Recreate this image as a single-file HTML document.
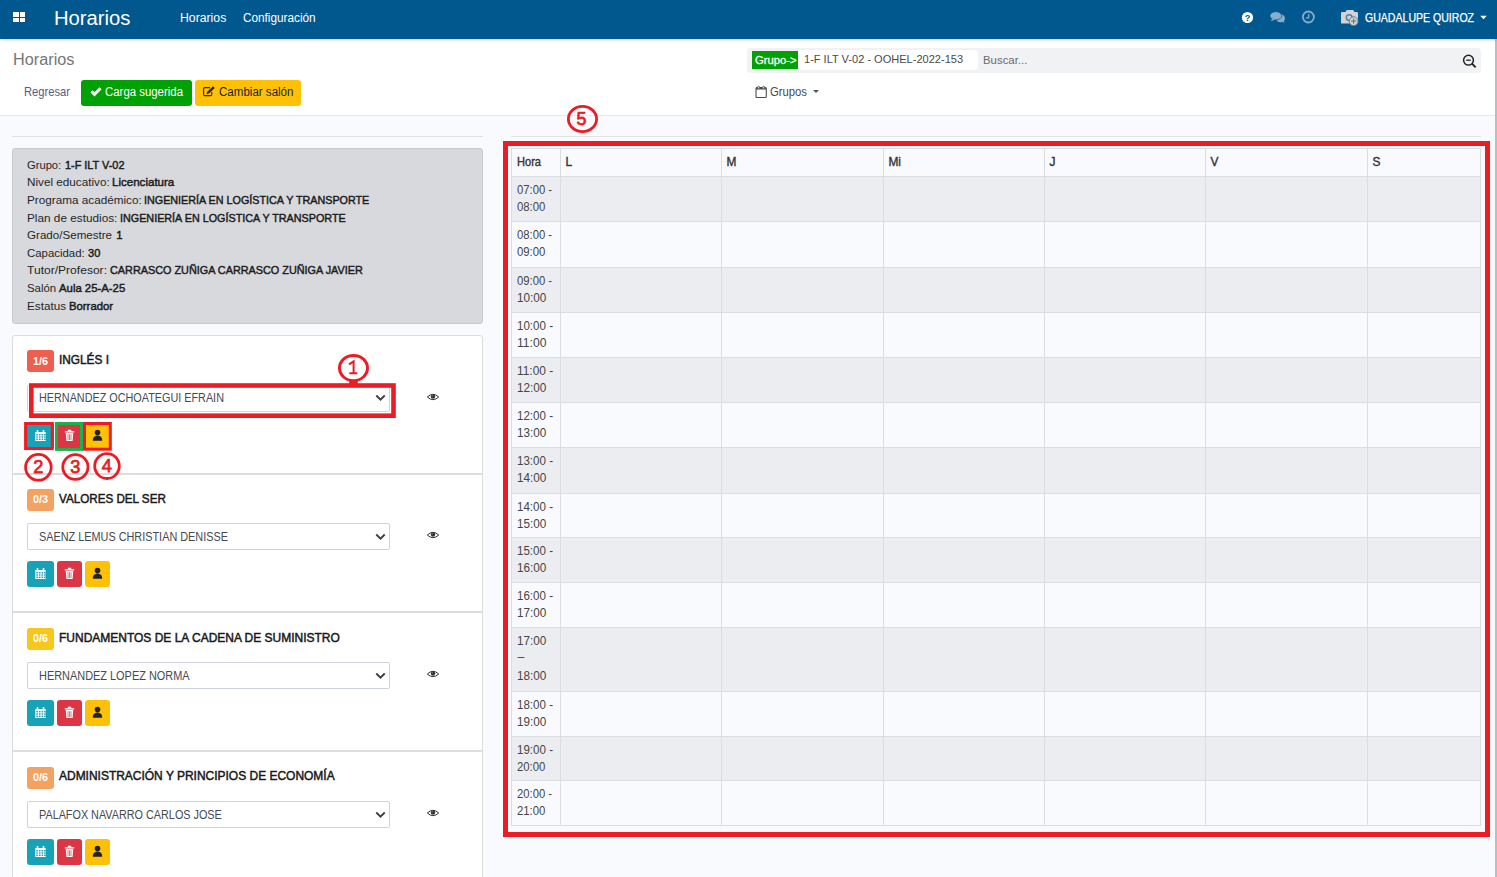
<!DOCTYPE html><html><head><meta charset="utf-8"><style>
*{box-sizing:border-box;margin:0;padding:0}
html,body{width:1497px;height:877px;overflow:hidden;background:#f9fafd;font-family:"Liberation Sans", sans-serif;}
.a{position:absolute;white-space:nowrap}
.t{position:absolute;white-space:nowrap;line-height:1}
</style></head><body><div class="a" style="left:0px;top:0px;width:1497px;height:39px;background:#01588f;box-shadow:0 1px 3px rgba(0,0,0,.18);z-index:2"></div>
<div class="a" style="left:0;top:0;width:1497px;height:39px;z-index:3">
<div class="a" style="left:13px;top:12px;width:5.5px;height:4.5px;background:#fff"></div>
<div class="a" style="left:19.5px;top:12px;width:5.5px;height:4.5px;background:#fff"></div>
<div class="a" style="left:13px;top:17.5px;width:5.5px;height:4.5px;background:#fff"></div>
<div class="a" style="left:19.5px;top:17.5px;width:5.5px;height:4.5px;background:#fff"></div>
<div class="t" id="tx0" style="left:54.00px;top:8.07px;font-size:20px;color:#fff;font-weight:400;letter-spacing:0.000px;transform:scaleX(1.0109);transform-origin:0 0;">Horarios</div>
<div class="t" id="tx1" style="left:180.40px;top:11.59px;font-size:12.3px;color:#fff;font-weight:400;letter-spacing:0.000px;transform:scaleX(0.9957);transform-origin:0 0;">Horarios</div>
<div class="t" id="tx2" style="left:243.00px;top:11.59px;font-size:12.3px;color:#fff;font-weight:400;letter-spacing:0.000px;transform:scaleX(0.9574);transform-origin:0 0;">Configuración</div>
<svg class="a" style="left:0;top:0" width="1497" height="39" viewBox="0 0 1497 39">
<circle cx="1247.5" cy="17.5" r="5.6" fill="#fff"/>
<text x="1247.6" y="21.1" font-family="Liberation Sans" font-size="9.2" font-weight="700" text-anchor="middle" fill="#01588f">?</text>
<ellipse cx="1280.6" cy="18.3" rx="4.3" ry="3.9" fill="#86aecb"/>
<path d="M1281.5 21 L1284.8 23 L1283.3 20.2 Z" fill="#86aecb"/>
<ellipse cx="1275.8" cy="15.8" rx="5.9" ry="4.1" fill="#86aecb" stroke="#01588f" stroke-width="0.7"/>
<path d="M1272.3 18.8 L1270.6 21.3 L1275 19.7 Z" fill="#86aecb"/>
<circle cx="1308.4" cy="17" r="5.5" fill="none" stroke="#86aecb" stroke-width="1.8"/>
<path d="M1308.7 13.9 V17.9 H1305.9" fill="none" stroke="#86aecb" stroke-width="1.3"/>
<path d="M1341 13.3 Q1341 12 1342.3 12 H1345.5 L1346.8 10 H1353.2 L1354.5 12 H1356.7 Q1358 12 1358 13.3 V22.4 Q1358 23.6 1356.7 23.6 H1342.3 Q1341 23.6 1341 22.4 Z" fill="#d3d4d5"/>
<circle cx="1349.2" cy="17.6" r="2.9" fill="none" stroke="#5d7f98" stroke-width="1.5"/>
<circle cx="1353.6" cy="21.2" r="4.4" fill="#d3d4d5" stroke="#5d7f98" stroke-width="1"/>
<path d="M1353.6 18.6 V23.8 M1351 21.2 H1356.2" stroke="#5d7f98" stroke-width="1.2"/>
<path d="M1480.2 15.8 H1486.8 L1483.5 19.3 Z" fill="#fff"/>
</svg>
<div class="t" id="tx3" style="left:1364.60px;top:11.60px;font-size:12.4px;color:#fff;font-weight:400;letter-spacing:0.000px;transform:scaleX(0.8516);transform-origin:0 0;-webkit-text-stroke:0.25px #fff">GUADALUPE QUIROZ</div>
</div>
<div class="a" style="left:0px;top:39px;width:1497px;height:77px;background:#fff;border-bottom:1px solid #e6e9ee"></div>
<div class="t" id="tx4" style="left:13.25px;top:52.39px;font-size:15.6px;color:#767676;font-weight:400;letter-spacing:0.000px;transform:scaleX(1.0432);transform-origin:0 0;">Horarios</div>
<div class="t" id="tx5" style="left:24.00px;top:85.76px;font-size:12.8px;color:#5a5b7e;font-weight:400;letter-spacing:0.000px;transform:scaleX(0.8751);transform-origin:0 0;">Regresar</div>
<div class="a" style="left:81px;top:80px;width:111px;height:26px;background:#00a104;border-radius:3px"></div>
<svg class="a" style="left:90px;top:86px" width="12" height="11" viewBox="0 0 12 11"><path d="M1.5 5.4 L4.5 8.4 L10.6 2.3" fill="none" stroke="#fff" stroke-width="3"/></svg>
<div class="t" id="tx6" style="left:104.70px;top:85.89px;font-size:12.3px;color:#fff;font-weight:400;letter-spacing:0.000px;transform:scaleX(0.9274);transform-origin:0 0;">Carga sugerida</div>
<div class="a" style="left:195px;top:80px;width:106px;height:26px;background:#ffc107;border-radius:3px"></div>
<svg class="a" style="left:200px;top:83px" width="18" height="16" viewBox="200 83 18 16"><path d="M210 87.6 H204.8 Q203.6 87.6 203.6 88.8 V94.4 Q203.6 95.6 204.8 95.6 H210.6 Q211.8 95.6 211.8 94.4 V92" fill="none" stroke="#2a2a2a" stroke-width="1.1"/><path d="M206.6 94.2 L207 92 L213 86.2 L214.8 88 L208.8 93.8 Z" fill="#2a2a2a"/><path d="M207.7 92.4 L208.5 93.2" stroke="#ffc107" stroke-width=".6"/></svg>
<div class="t" id="tx7" style="left:218.50px;top:85.89px;font-size:12.3px;color:#212529;font-weight:400;letter-spacing:0.000px;transform:scaleX(0.9393);transform-origin:0 0;">Cambiar salón</div>
<div class="a" style="left:747px;top:48px;width:734px;height:25px;background:#f1f2f4;border-radius:4px"></div>
<div class="a" style="left:752px;top:51px;width:46px;height:18px;background:#00a104"></div>
<div class="t" id="tx8" style="left:755.00px;top:54.71px;font-size:11.8px;color:#fff;font-weight:400;letter-spacing:0.000px;transform:scaleX(0.9535);transform-origin:0 0;-webkit-text-stroke:0.3px #fff">Grupo-&gt;</div>
<div class="a" style="left:798px;top:50px;width:180px;height:20px;background:#fff;border-radius:0 4px 4px 0"></div>
<div class="t" id="tx9" style="left:803.70px;top:54.01px;font-size:11.8px;color:#4a4a4a;font-weight:400;letter-spacing:0.000px;transform:scaleX(0.9355);transform-origin:0 0;">1-F ILT V-02 - OOHEL-2022-153</div>
<div class="t" id="tx10" style="left:982.50px;top:55.01px;font-size:11.8px;color:#6a6a6a;font-weight:400;letter-spacing:0.000px;transform:scaleX(0.9660);transform-origin:0 0;">Buscar...</div>
<svg class="a" style="left:1461px;top:53px" width="17" height="17" viewBox="0 0 17 17"><circle cx="7.5" cy="7.2" r="4.9" fill="none" stroke="#222" stroke-width="1.5"/><path d="M5.2 7.2 H9.8" stroke="#222" stroke-width="1.3"/><path d="M11 10.7 L14.6 14.4" stroke="#222" stroke-width="1.9"/></svg>
<svg class="a" style="left:754px;top:85px" width="14" height="14" viewBox="0 0 14 14"><rect x="2" y="2.6" width="10.3" height="9.9" rx="1" fill="none" stroke="#4d4d4d" stroke-width="1.1"/><rect x="2" y="2.6" width="10.3" height="1.9" fill="#4d4d4d"/><rect x="3.7" y="1.3" width="1.9" height="2.6" rx=".8" fill="#c8f0d8" stroke="#555" stroke-width=".8"/><rect x="8.7" y="1.3" width="1.9" height="2.6" rx=".8" fill="#c8f0d8" stroke="#555" stroke-width=".8"/></svg>
<div class="t" id="tx11" style="left:769.70px;top:85.92px;font-size:12.5px;color:#4a4a4a;font-weight:400;letter-spacing:0.000px;transform:scaleX(0.9024);transform-origin:0 0;">Grupos</div>
<div class="a" style="left:813px;top:90px;width:0;height:0;border-left:3.3px solid transparent;border-right:3.3px solid transparent;border-top:3.3px solid #555"></div>
<div class="a" style="left:1495px;top:39px;width:2px;height:838px;background:#b9bec3"></div>
<div class="a" style="left:12px;top:136px;width:471px;height:1px;background:#dfe1e5"></div>
<div class="a" style="left:12px;top:148px;width:471px;height:176px;background:#d8d9dc;border:1px solid #c9cacd;border-radius:3px"></div>
<div class="t" id="tx12" style="left:27.45px;top:159.67px;font-size:11.5px;color:#262626;font-weight:400;letter-spacing:0.000px;transform:scaleX(0.9723);transform-origin:0 0;">Grupo:</div>
<div class="t" id="tx13" style="left:64.70px;top:159.83px;font-size:11.3px;color:#1c1c1c;font-weight:400;letter-spacing:0.000px;transform:scaleX(0.9629);transform-origin:0 0;-webkit-text-stroke:0.45px #1c1c1c">1-F ILT V-02</div>
<div class="t" id="tx14" style="left:27.45px;top:177.28px;font-size:11.5px;color:#262626;font-weight:400;letter-spacing:0.000px;transform:scaleX(1.0188);transform-origin:0 0;">Nivel educativo:</div>
<div class="t" id="tx15" style="left:112.30px;top:177.44px;font-size:11.3px;color:#1c1c1c;font-weight:400;letter-spacing:0.000px;transform:scaleX(1.0227);transform-origin:0 0;-webkit-text-stroke:0.45px #1c1c1c">Licenciatura</div>
<div class="t" id="tx16" style="left:27.45px;top:194.89px;font-size:11.5px;color:#262626;font-weight:400;letter-spacing:0.000px;transform:scaleX(1.0198);transform-origin:0 0;">Programa académico:</div>
<div class="t" id="tx17" style="left:144.40px;top:195.05px;font-size:11.3px;color:#1c1c1c;font-weight:400;letter-spacing:0.000px;transform:scaleX(0.9527);transform-origin:0 0;-webkit-text-stroke:0.45px #1c1c1c">INGENIERÍA EN LOGÍSTICA Y TRANSPORTE</div>
<div class="t" id="tx18" style="left:27.45px;top:212.50px;font-size:11.5px;color:#262626;font-weight:400;letter-spacing:0.000px;transform:scaleX(1.0242);transform-origin:0 0;">Plan de estudios:</div>
<div class="t" id="tx19" style="left:119.60px;top:212.66px;font-size:11.3px;color:#1c1c1c;font-weight:400;letter-spacing:0.000px;transform:scaleX(0.9544);transform-origin:0 0;-webkit-text-stroke:0.45px #1c1c1c">INGENIERÍA EN LOGÍSTICA Y TRANSPORTE</div>
<div class="t" id="tx20" style="left:27.45px;top:230.11px;font-size:11.5px;color:#262626;font-weight:400;letter-spacing:0.000px;transform:scaleX(1.0083);transform-origin:0 0;">Grado/Semestre</div>
<div class="t" id="tx21" style="left:116.20px;top:230.27px;font-size:11.3px;color:#1c1c1c;font-weight:400;letter-spacing:0.000px;-webkit-text-stroke:0.45px #1c1c1c">1</div>
<div class="t" id="tx22" style="left:27.45px;top:247.72px;font-size:11.5px;color:#262626;font-weight:400;letter-spacing:0.000px;transform:scaleX(0.9915);transform-origin:0 0;">Capacidad:</div>
<div class="t" id="tx23" style="left:87.90px;top:247.88px;font-size:11.3px;color:#1c1c1c;font-weight:400;letter-spacing:0.000px;transform:scaleX(0.9771);transform-origin:0 0;-webkit-text-stroke:0.45px #1c1c1c">30</div>
<div class="t" id="tx24" style="left:27.45px;top:265.33px;font-size:11.5px;color:#262626;font-weight:400;letter-spacing:0.000px;transform:scaleX(1.0488);transform-origin:0 0;">Tutor/Profesor:</div>
<div class="t" id="tx25" style="left:109.60px;top:265.49px;font-size:11.3px;color:#1c1c1c;font-weight:400;letter-spacing:0.000px;transform:scaleX(0.9597);transform-origin:0 0;-webkit-text-stroke:0.45px #1c1c1c">CARRASCO ZUÑIGA CARRASCO ZUÑIGA JAVIER</div>
<div class="t" id="tx26" style="left:27.45px;top:282.94px;font-size:11.5px;color:#262626;font-weight:400;letter-spacing:0.000px;transform:scaleX(0.9934);transform-origin:0 0;">Salón</div>
<div class="t" id="tx27" style="left:59.10px;top:283.10px;font-size:11.3px;color:#1c1c1c;font-weight:400;letter-spacing:0.000px;transform:scaleX(1.0046);transform-origin:0 0;-webkit-text-stroke:0.45px #1c1c1c">Aula 25-A-25</div>
<div class="t" id="tx28" style="left:27.45px;top:300.55px;font-size:11.5px;color:#262626;font-weight:400;letter-spacing:0.000px;transform:scaleX(1.0166);transform-origin:0 0;">Estatus</div>
<div class="t" id="tx29" style="left:69.30px;top:300.71px;font-size:11.3px;color:#1c1c1c;font-weight:400;letter-spacing:0.000px;transform:scaleX(1.0024);transform-origin:0 0;-webkit-text-stroke:0.45px #1c1c1c">Borrador</div>
<div class="a" style="left:12px;top:335px;width:471px;height:600px;background:#fff;border:1px solid #dcdcdc;border-radius:3px"></div>
<div class="a" style="left:12px;top:473px;width:471px;height:2px;background:#dddddd"></div>
<div class="a" style="left:12px;top:611px;width:471px;height:2px;background:#dddddd"></div>
<div class="a" style="left:12px;top:750px;width:471px;height:2px;background:#dddddd"></div>
<div class="a" style="left:27px;top:350px;width:27px;height:22px;background:#ef5f4f;border-radius:3px"></div>
<div class="t" id="tx30" style="left:32.80px;top:355.64px;font-size:10.7px;color:#fff;font-weight:700;letter-spacing:0.000px;transform:scaleX(1.0084);transform-origin:0 0;">1/6</div>
<div class="t" id="tx31" style="left:59.20px;top:353.96px;font-size:12.8px;color:#1a1a1a;font-weight:400;letter-spacing:0.000px;transform:scaleX(0.9245);transform-origin:0 0;-webkit-text-stroke:0.5px #1a1a1a">INGLÉS I</div>
<div class="a" style="left:27px;top:385px;width:363px;height:27px;background:#fff;border:1px solid #cfd4da;border-radius:2px"></div>
<div class="t" id="tx32" style="left:39.40px;top:393.13px;font-size:11.9px;color:#454a52;font-weight:400;letter-spacing:0.000px;transform:scaleX(0.9099);transform-origin:0 0;">HERNANDEZ OCHOATEGUI EFRAIN</div>
<svg class="a" style="left:375px;top:394.2px" width="11" height="8" viewBox="0 0 11 8"><path d="M1.3 1.5 L5.5 5.6 L9.7 1.5" fill="none" stroke="#3a4048" stroke-width="1.9"/></svg>
<svg class="a" style="left:425.5px;top:391.7px" width="14" height="10" viewBox="0 0 14 10"><path d="M1.3 5 Q7 -0.4 12.7 5 Q7 10.4 1.3 5 Z" fill="#fff" stroke="#333" stroke-width="1"/><circle cx="7" cy="4.5" r="2.2" fill="#333"/><circle cx="6.2" cy="3.8" r=".6" fill="#999"/></svg>
<div class="a" style="left:27px;top:423px;width:27px;height:26px;background:#17a2b8;border-radius:3px"></div>
<svg class="a" style="left:34px;top:429px" width="13" height="13" viewBox="0 0 13 13"><path d="M1.3 3 H11.7 V12 H1.3 Z" fill="#fff"/><path d="M3.5 1 V4 M9.5 1 V4" stroke="#fff" stroke-width="1.6"/><rect x="2.3" y="5.0" width="1.6" height="1.4" fill="#17a2b8"/><rect x="2.3" y="7.3" width="1.6" height="1.4" fill="#17a2b8"/><rect x="2.3" y="9.6" width="1.6" height="1.4" fill="#17a2b8"/><rect x="4.9" y="5.0" width="1.6" height="1.4" fill="#17a2b8"/><rect x="4.9" y="7.3" width="1.6" height="1.4" fill="#17a2b8"/><rect x="4.9" y="9.6" width="1.6" height="1.4" fill="#17a2b8"/><rect x="7.5" y="5.0" width="1.6" height="1.4" fill="#17a2b8"/><rect x="7.5" y="7.3" width="1.6" height="1.4" fill="#17a2b8"/><rect x="7.5" y="9.6" width="1.6" height="1.4" fill="#17a2b8"/><rect x="10.100000000000001" y="5.0" width="1.6" height="1.4" fill="#17a2b8"/><rect x="10.100000000000001" y="7.3" width="1.6" height="1.4" fill="#17a2b8"/><rect x="10.100000000000001" y="9.6" width="1.6" height="1.4" fill="#17a2b8"/></svg>
<div class="a" style="left:57px;top:423px;width:25px;height:26px;background:#dc3545;border-radius:3px"></div>
<svg class="a" style="left:64px;top:429px" width="11" height="13" viewBox="0 0 11 13"><path d="M0.8 2.3 H10.2 V3.6 H0.8 Z M3.8 0.8 H7.2 V2.3 H3.8 Z" fill="#fff"/><path d="M1.8 4 H9.2 L8.6 12 H2.4 Z" fill="#fff"/><path d="M4 5.2 V11 M5.5 5.2 V11 M7 5.2 V11" stroke="#dc3545" stroke-width=".7"/></svg>
<div class="a" style="left:85px;top:423px;width:25px;height:26px;background:#ffc107;border-radius:3px"></div>
<svg class="a" style="left:91px;top:429px" width="13" height="13" viewBox="0 0 13 13"><circle cx="6.5" cy="3.6" r="2.8" fill="#212529"/><path d="M1.8 11.8 Q1.6 6.8 6.5 6.6 Q11.4 6.8 11.2 11.8 Z" fill="#212529"/></svg>
<div class="a" style="left:27px;top:489px;width:27px;height:22px;background:#f4a261;border-radius:3px"></div>
<div class="t" id="tx33" style="left:32.80px;top:494.34px;font-size:10.7px;color:#fff;font-weight:700;letter-spacing:0.000px;transform:scaleX(1.0084);transform-origin:0 0;">0/3</div>
<div class="t" id="tx34" style="left:59.20px;top:492.66px;font-size:12.8px;color:#1a1a1a;font-weight:400;letter-spacing:0.000px;transform:scaleX(0.9103);transform-origin:0 0;-webkit-text-stroke:0.5px #1a1a1a">VALORES DEL SER</div>
<div class="a" style="left:27px;top:523px;width:363px;height:27px;background:#fff;border:1px solid #cfd4da;border-radius:2px"></div>
<div class="t" id="tx35" style="left:39.40px;top:531.83px;font-size:11.9px;color:#454a52;font-weight:400;letter-spacing:0.000px;transform:scaleX(0.9136);transform-origin:0 0;">SAENZ LEMUS CHRISTIAN DENISSE</div>
<svg class="a" style="left:375px;top:532.9px" width="11" height="8" viewBox="0 0 11 8"><path d="M1.3 1.5 L5.5 5.6 L9.7 1.5" fill="none" stroke="#3a4048" stroke-width="1.9"/></svg>
<svg class="a" style="left:425.5px;top:530.4px" width="14" height="10" viewBox="0 0 14 10"><path d="M1.3 5 Q7 -0.4 12.7 5 Q7 10.4 1.3 5 Z" fill="#fff" stroke="#333" stroke-width="1"/><circle cx="7" cy="4.5" r="2.2" fill="#333"/><circle cx="6.2" cy="3.8" r=".6" fill="#999"/></svg>
<div class="a" style="left:27px;top:561px;width:27px;height:26px;background:#17a2b8;border-radius:3px"></div>
<svg class="a" style="left:34px;top:567px" width="13" height="13" viewBox="0 0 13 13"><path d="M1.3 3 H11.7 V12 H1.3 Z" fill="#fff"/><path d="M3.5 1 V4 M9.5 1 V4" stroke="#fff" stroke-width="1.6"/><rect x="2.3" y="5.0" width="1.6" height="1.4" fill="#17a2b8"/><rect x="2.3" y="7.3" width="1.6" height="1.4" fill="#17a2b8"/><rect x="2.3" y="9.6" width="1.6" height="1.4" fill="#17a2b8"/><rect x="4.9" y="5.0" width="1.6" height="1.4" fill="#17a2b8"/><rect x="4.9" y="7.3" width="1.6" height="1.4" fill="#17a2b8"/><rect x="4.9" y="9.6" width="1.6" height="1.4" fill="#17a2b8"/><rect x="7.5" y="5.0" width="1.6" height="1.4" fill="#17a2b8"/><rect x="7.5" y="7.3" width="1.6" height="1.4" fill="#17a2b8"/><rect x="7.5" y="9.6" width="1.6" height="1.4" fill="#17a2b8"/><rect x="10.100000000000001" y="5.0" width="1.6" height="1.4" fill="#17a2b8"/><rect x="10.100000000000001" y="7.3" width="1.6" height="1.4" fill="#17a2b8"/><rect x="10.100000000000001" y="9.6" width="1.6" height="1.4" fill="#17a2b8"/></svg>
<div class="a" style="left:57px;top:561px;width:25px;height:26px;background:#dc3545;border-radius:3px"></div>
<svg class="a" style="left:64px;top:567px" width="11" height="13" viewBox="0 0 11 13"><path d="M0.8 2.3 H10.2 V3.6 H0.8 Z M3.8 0.8 H7.2 V2.3 H3.8 Z" fill="#fff"/><path d="M1.8 4 H9.2 L8.6 12 H2.4 Z" fill="#fff"/><path d="M4 5.2 V11 M5.5 5.2 V11 M7 5.2 V11" stroke="#dc3545" stroke-width=".7"/></svg>
<div class="a" style="left:85px;top:561px;width:25px;height:26px;background:#ffc107;border-radius:3px"></div>
<svg class="a" style="left:91px;top:567px" width="13" height="13" viewBox="0 0 13 13"><circle cx="6.5" cy="3.6" r="2.8" fill="#212529"/><path d="M1.8 11.8 Q1.6 6.8 6.5 6.6 Q11.4 6.8 11.2 11.8 Z" fill="#212529"/></svg>
<div class="a" style="left:27px;top:628px;width:27px;height:22px;background:#f6c81d;border-radius:3px"></div>
<div class="t" id="tx36" style="left:32.80px;top:633.34px;font-size:10.7px;color:#fff;font-weight:700;letter-spacing:0.000px;transform:scaleX(1.0084);transform-origin:0 0;">0/6</div>
<div class="t" id="tx37" style="left:59.20px;top:631.66px;font-size:12.8px;color:#1a1a1a;font-weight:400;letter-spacing:0.000px;transform:scaleX(0.9367);transform-origin:0 0;-webkit-text-stroke:0.5px #1a1a1a">FUNDAMENTOS DE LA CADENA DE SUMINISTRO</div>
<div class="a" style="left:27px;top:662px;width:363px;height:27px;background:#fff;border:1px solid #cfd4da;border-radius:2px"></div>
<div class="t" id="tx38" style="left:39.40px;top:670.83px;font-size:11.9px;color:#454a52;font-weight:400;letter-spacing:0.000px;transform:scaleX(0.9190);transform-origin:0 0;">HERNANDEZ LOPEZ NORMA</div>
<svg class="a" style="left:375px;top:671.9px" width="11" height="8" viewBox="0 0 11 8"><path d="M1.3 1.5 L5.5 5.6 L9.7 1.5" fill="none" stroke="#3a4048" stroke-width="1.9"/></svg>
<svg class="a" style="left:425.5px;top:669.4px" width="14" height="10" viewBox="0 0 14 10"><path d="M1.3 5 Q7 -0.4 12.7 5 Q7 10.4 1.3 5 Z" fill="#fff" stroke="#333" stroke-width="1"/><circle cx="7" cy="4.5" r="2.2" fill="#333"/><circle cx="6.2" cy="3.8" r=".6" fill="#999"/></svg>
<div class="a" style="left:27px;top:700px;width:27px;height:26px;background:#17a2b8;border-radius:3px"></div>
<svg class="a" style="left:34px;top:706px" width="13" height="13" viewBox="0 0 13 13"><path d="M1.3 3 H11.7 V12 H1.3 Z" fill="#fff"/><path d="M3.5 1 V4 M9.5 1 V4" stroke="#fff" stroke-width="1.6"/><rect x="2.3" y="5.0" width="1.6" height="1.4" fill="#17a2b8"/><rect x="2.3" y="7.3" width="1.6" height="1.4" fill="#17a2b8"/><rect x="2.3" y="9.6" width="1.6" height="1.4" fill="#17a2b8"/><rect x="4.9" y="5.0" width="1.6" height="1.4" fill="#17a2b8"/><rect x="4.9" y="7.3" width="1.6" height="1.4" fill="#17a2b8"/><rect x="4.9" y="9.6" width="1.6" height="1.4" fill="#17a2b8"/><rect x="7.5" y="5.0" width="1.6" height="1.4" fill="#17a2b8"/><rect x="7.5" y="7.3" width="1.6" height="1.4" fill="#17a2b8"/><rect x="7.5" y="9.6" width="1.6" height="1.4" fill="#17a2b8"/><rect x="10.100000000000001" y="5.0" width="1.6" height="1.4" fill="#17a2b8"/><rect x="10.100000000000001" y="7.3" width="1.6" height="1.4" fill="#17a2b8"/><rect x="10.100000000000001" y="9.6" width="1.6" height="1.4" fill="#17a2b8"/></svg>
<div class="a" style="left:57px;top:700px;width:25px;height:26px;background:#dc3545;border-radius:3px"></div>
<svg class="a" style="left:64px;top:706px" width="11" height="13" viewBox="0 0 11 13"><path d="M0.8 2.3 H10.2 V3.6 H0.8 Z M3.8 0.8 H7.2 V2.3 H3.8 Z" fill="#fff"/><path d="M1.8 4 H9.2 L8.6 12 H2.4 Z" fill="#fff"/><path d="M4 5.2 V11 M5.5 5.2 V11 M7 5.2 V11" stroke="#dc3545" stroke-width=".7"/></svg>
<div class="a" style="left:85px;top:700px;width:25px;height:26px;background:#ffc107;border-radius:3px"></div>
<svg class="a" style="left:91px;top:706px" width="13" height="13" viewBox="0 0 13 13"><circle cx="6.5" cy="3.6" r="2.8" fill="#212529"/><path d="M1.8 11.8 Q1.6 6.8 6.5 6.6 Q11.4 6.8 11.2 11.8 Z" fill="#212529"/></svg>
<div class="a" style="left:27px;top:767px;width:27px;height:22px;background:#f4a261;border-radius:3px"></div>
<div class="t" id="tx39" style="left:32.80px;top:772.04px;font-size:10.7px;color:#fff;font-weight:700;letter-spacing:0.000px;transform:scaleX(1.0084);transform-origin:0 0;">0/6</div>
<div class="t" id="tx40" style="left:59.20px;top:770.36px;font-size:12.8px;color:#1a1a1a;font-weight:400;letter-spacing:0.000px;transform:scaleX(0.9356);transform-origin:0 0;-webkit-text-stroke:0.5px #1a1a1a">ADMINISTRACIÓN Y PRINCIPIOS DE ECONOMÍA</div>
<div class="a" style="left:27px;top:801px;width:363px;height:27px;background:#fff;border:1px solid #cfd4da;border-radius:2px"></div>
<div class="t" id="tx41" style="left:39.40px;top:809.53px;font-size:11.9px;color:#454a52;font-weight:400;letter-spacing:0.000px;transform:scaleX(0.9100);transform-origin:0 0;">PALAFOX NAVARRO CARLOS JOSE</div>
<svg class="a" style="left:375px;top:810.6px" width="11" height="8" viewBox="0 0 11 8"><path d="M1.3 1.5 L5.5 5.6 L9.7 1.5" fill="none" stroke="#3a4048" stroke-width="1.9"/></svg>
<svg class="a" style="left:425.5px;top:808.1px" width="14" height="10" viewBox="0 0 14 10"><path d="M1.3 5 Q7 -0.4 12.7 5 Q7 10.4 1.3 5 Z" fill="#fff" stroke="#333" stroke-width="1"/><circle cx="7" cy="4.5" r="2.2" fill="#333"/><circle cx="6.2" cy="3.8" r=".6" fill="#999"/></svg>
<div class="a" style="left:27px;top:839px;width:27px;height:26px;background:#17a2b8;border-radius:3px"></div>
<svg class="a" style="left:34px;top:845px" width="13" height="13" viewBox="0 0 13 13"><path d="M1.3 3 H11.7 V12 H1.3 Z" fill="#fff"/><path d="M3.5 1 V4 M9.5 1 V4" stroke="#fff" stroke-width="1.6"/><rect x="2.3" y="5.0" width="1.6" height="1.4" fill="#17a2b8"/><rect x="2.3" y="7.3" width="1.6" height="1.4" fill="#17a2b8"/><rect x="2.3" y="9.6" width="1.6" height="1.4" fill="#17a2b8"/><rect x="4.9" y="5.0" width="1.6" height="1.4" fill="#17a2b8"/><rect x="4.9" y="7.3" width="1.6" height="1.4" fill="#17a2b8"/><rect x="4.9" y="9.6" width="1.6" height="1.4" fill="#17a2b8"/><rect x="7.5" y="5.0" width="1.6" height="1.4" fill="#17a2b8"/><rect x="7.5" y="7.3" width="1.6" height="1.4" fill="#17a2b8"/><rect x="7.5" y="9.6" width="1.6" height="1.4" fill="#17a2b8"/><rect x="10.100000000000001" y="5.0" width="1.6" height="1.4" fill="#17a2b8"/><rect x="10.100000000000001" y="7.3" width="1.6" height="1.4" fill="#17a2b8"/><rect x="10.100000000000001" y="9.6" width="1.6" height="1.4" fill="#17a2b8"/></svg>
<div class="a" style="left:57px;top:839px;width:25px;height:26px;background:#dc3545;border-radius:3px"></div>
<svg class="a" style="left:64px;top:845px" width="11" height="13" viewBox="0 0 11 13"><path d="M0.8 2.3 H10.2 V3.6 H0.8 Z M3.8 0.8 H7.2 V2.3 H3.8 Z" fill="#fff"/><path d="M1.8 4 H9.2 L8.6 12 H2.4 Z" fill="#fff"/><path d="M4 5.2 V11 M5.5 5.2 V11 M7 5.2 V11" stroke="#dc3545" stroke-width=".7"/></svg>
<div class="a" style="left:85px;top:839px;width:25px;height:26px;background:#ffc107;border-radius:3px"></div>
<svg class="a" style="left:91px;top:845px" width="13" height="13" viewBox="0 0 13 13"><circle cx="6.5" cy="3.6" r="2.8" fill="#212529"/><path d="M1.8 11.8 Q1.6 6.8 6.5 6.6 Q11.4 6.8 11.2 11.8 Z" fill="#212529"/></svg>
<div class="a" style="left:511px;top:136px;width:970px;height:1px;background:#dfe1e5"></div>
<div class="a" style="left:511px;top:148px;width:970px;height:28px;background:#f9fafd"></div>
<div class="a" style="left:511px;top:176px;width:970px;height:45px;background:#ecedf0"></div>
<div class="a" style="left:511px;top:221px;width:970px;height:46px;background:#f9fafd"></div>
<div class="a" style="left:511px;top:267px;width:970px;height:45px;background:#ecedf0"></div>
<div class="a" style="left:511px;top:312px;width:970px;height:45px;background:#f9fafd"></div>
<div class="a" style="left:511px;top:357px;width:970px;height:45px;background:#ecedf0"></div>
<div class="a" style="left:511px;top:402px;width:970px;height:45px;background:#f9fafd"></div>
<div class="a" style="left:511px;top:447px;width:970px;height:46px;background:#ecedf0"></div>
<div class="a" style="left:511px;top:493px;width:970px;height:44px;background:#f9fafd"></div>
<div class="a" style="left:511px;top:537px;width:970px;height:45px;background:#ecedf0"></div>
<div class="a" style="left:511px;top:582px;width:970px;height:45px;background:#f9fafd"></div>
<div class="a" style="left:511px;top:627px;width:970px;height:64px;background:#ecedf0"></div>
<div class="a" style="left:511px;top:691px;width:970px;height:45px;background:#f9fafd"></div>
<div class="a" style="left:511px;top:736px;width:970px;height:44px;background:#ecedf0"></div>
<div class="a" style="left:511px;top:780px;width:970px;height:45px;background:#f9fafd"></div>
<div class="a" style="left:511px;top:148px;width:970px;height:1px;background:#dcdde1"></div>
<div class="a" style="left:511px;top:176px;width:970px;height:1px;background:#dcdde1"></div>
<div class="a" style="left:511px;top:221px;width:970px;height:1px;background:#dcdde1"></div>
<div class="a" style="left:511px;top:267px;width:970px;height:1px;background:#dcdde1"></div>
<div class="a" style="left:511px;top:312px;width:970px;height:1px;background:#dcdde1"></div>
<div class="a" style="left:511px;top:357px;width:970px;height:1px;background:#dcdde1"></div>
<div class="a" style="left:511px;top:402px;width:970px;height:1px;background:#dcdde1"></div>
<div class="a" style="left:511px;top:447px;width:970px;height:1px;background:#dcdde1"></div>
<div class="a" style="left:511px;top:493px;width:970px;height:1px;background:#dcdde1"></div>
<div class="a" style="left:511px;top:537px;width:970px;height:1px;background:#dcdde1"></div>
<div class="a" style="left:511px;top:582px;width:970px;height:1px;background:#dcdde1"></div>
<div class="a" style="left:511px;top:627px;width:970px;height:1px;background:#dcdde1"></div>
<div class="a" style="left:511px;top:691px;width:970px;height:1px;background:#dcdde1"></div>
<div class="a" style="left:511px;top:736px;width:970px;height:1px;background:#dcdde1"></div>
<div class="a" style="left:511px;top:780px;width:970px;height:1px;background:#dcdde1"></div>
<div class="a" style="left:511px;top:825px;width:970px;height:1px;background:#dcdde1"></div>
<div class="a" style="left:511px;top:148px;width:1px;height:678px;background:#dcdde1"></div>
<div class="a" style="left:560px;top:148px;width:1px;height:678px;background:#dcdde1"></div>
<div class="a" style="left:721px;top:148px;width:1px;height:678px;background:#dcdde1"></div>
<div class="a" style="left:883px;top:148px;width:1px;height:678px;background:#dcdde1"></div>
<div class="a" style="left:1044px;top:148px;width:1px;height:678px;background:#dcdde1"></div>
<div class="a" style="left:1205px;top:148px;width:1px;height:678px;background:#dcdde1"></div>
<div class="a" style="left:1367px;top:148px;width:1px;height:678px;background:#dcdde1"></div>
<div class="a" style="left:1480px;top:148px;width:1px;height:678px;background:#dcdde1"></div>
<div class="t" id="tx42" style="left:517.20px;top:156.63px;font-size:11.9px;color:#363636;font-weight:400;letter-spacing:0.000px;transform:scaleX(0.9312);transform-origin:0 0;-webkit-text-stroke:0.4px #363636">Hora</div>
<div class="t" id="tx43" style="left:565.40px;top:156.63px;font-size:11.9px;color:#363636;font-weight:400;letter-spacing:0.000px;-webkit-text-stroke:0.4px #363636">L</div>
<div class="t" id="tx44" style="left:726.40px;top:156.63px;font-size:11.9px;color:#363636;font-weight:400;letter-spacing:0.000px;-webkit-text-stroke:0.4px #363636">M</div>
<div class="t" id="tx45" style="left:888.40px;top:156.63px;font-size:11.9px;color:#363636;font-weight:400;letter-spacing:0.000px;-webkit-text-stroke:0.4px #363636">Mi</div>
<div class="t" id="tx46" style="left:1049.40px;top:156.63px;font-size:11.9px;color:#363636;font-weight:400;letter-spacing:0.000px;-webkit-text-stroke:0.4px #363636">J</div>
<div class="t" id="tx47" style="left:1210.40px;top:156.63px;font-size:11.9px;color:#363636;font-weight:400;letter-spacing:0.000px;-webkit-text-stroke:0.4px #363636">V</div>
<div class="t" id="tx48" style="left:1372.40px;top:156.63px;font-size:11.9px;color:#363636;font-weight:400;letter-spacing:0.000px;-webkit-text-stroke:0.4px #363636">S</div>
<div class="t" id="tx49" style="left:517.40px;top:183.99px;font-size:12.3px;color:#454545;font-weight:400;letter-spacing:0.000px;transform:scaleX(0.9160);transform-origin:0 0;">07:00 -</div>
<div class="t" id="tx50" style="left:517.40px;top:201.09px;font-size:12.3px;color:#454545;font-weight:400;letter-spacing:0.000px;transform:scaleX(0.9227);transform-origin:0 0;">08:00</div>
<div class="t" id="tx51" style="left:517.40px;top:228.99px;font-size:12.3px;color:#454545;font-weight:400;letter-spacing:0.000px;transform:scaleX(0.9160);transform-origin:0 0;">08:00 -</div>
<div class="t" id="tx52" style="left:517.40px;top:246.09px;font-size:12.3px;color:#454545;font-weight:400;letter-spacing:0.000px;transform:scaleX(0.9227);transform-origin:0 0;">09:00</div>
<div class="t" id="tx53" style="left:517.40px;top:274.99px;font-size:12.3px;color:#454545;font-weight:400;letter-spacing:0.000px;transform:scaleX(0.9160);transform-origin:0 0;">09:00 -</div>
<div class="t" id="tx54" style="left:517.40px;top:292.09px;font-size:12.3px;color:#454545;font-weight:400;letter-spacing:0.000px;transform:scaleX(0.9535);transform-origin:0 0;">10:00</div>
<div class="t" id="tx55" style="left:517.40px;top:319.99px;font-size:12.3px;color:#454545;font-weight:400;letter-spacing:0.000px;transform:scaleX(0.9408);transform-origin:0 0;">10:00 -</div>
<div class="t" id="tx56" style="left:517.40px;top:337.09px;font-size:12.3px;color:#454545;font-weight:400;letter-spacing:0.000px;transform:scaleX(0.9864);transform-origin:0 0;">11:00</div>
<div class="t" id="tx57" style="left:517.40px;top:364.99px;font-size:12.3px;color:#454545;font-weight:400;letter-spacing:0.000px;transform:scaleX(0.9669);transform-origin:0 0;">11:00 -</div>
<div class="t" id="tx58" style="left:517.40px;top:382.09px;font-size:12.3px;color:#454545;font-weight:400;letter-spacing:0.000px;transform:scaleX(0.9535);transform-origin:0 0;">12:00</div>
<div class="t" id="tx59" style="left:517.40px;top:409.99px;font-size:12.3px;color:#454545;font-weight:400;letter-spacing:0.000px;transform:scaleX(0.9408);transform-origin:0 0;">12:00 -</div>
<div class="t" id="tx60" style="left:517.40px;top:427.09px;font-size:12.3px;color:#454545;font-weight:400;letter-spacing:0.000px;transform:scaleX(0.9535);transform-origin:0 0;">13:00</div>
<div class="t" id="tx61" style="left:517.40px;top:454.99px;font-size:12.3px;color:#454545;font-weight:400;letter-spacing:0.000px;transform:scaleX(0.9408);transform-origin:0 0;">13:00 -</div>
<div class="t" id="tx62" style="left:517.40px;top:472.09px;font-size:12.3px;color:#454545;font-weight:400;letter-spacing:0.000px;transform:scaleX(0.9535);transform-origin:0 0;">14:00</div>
<div class="t" id="tx63" style="left:517.40px;top:500.99px;font-size:12.3px;color:#454545;font-weight:400;letter-spacing:0.000px;transform:scaleX(0.9408);transform-origin:0 0;">14:00 -</div>
<div class="t" id="tx64" style="left:517.40px;top:518.09px;font-size:12.3px;color:#454545;font-weight:400;letter-spacing:0.000px;transform:scaleX(0.9535);transform-origin:0 0;">15:00</div>
<div class="t" id="tx65" style="left:517.40px;top:544.99px;font-size:12.3px;color:#454545;font-weight:400;letter-spacing:0.000px;transform:scaleX(0.9408);transform-origin:0 0;">15:00 -</div>
<div class="t" id="tx66" style="left:517.40px;top:562.09px;font-size:12.3px;color:#454545;font-weight:400;letter-spacing:0.000px;transform:scaleX(0.9535);transform-origin:0 0;">16:00</div>
<div class="t" id="tx67" style="left:517.40px;top:589.99px;font-size:12.3px;color:#454545;font-weight:400;letter-spacing:0.000px;transform:scaleX(0.9408);transform-origin:0 0;">16:00 -</div>
<div class="t" id="tx68" style="left:517.40px;top:607.09px;font-size:12.3px;color:#454545;font-weight:400;letter-spacing:0.000px;transform:scaleX(0.9535);transform-origin:0 0;">17:00</div>
<div class="t" id="tx69" style="left:517.40px;top:634.69px;font-size:12.3px;color:#454545;font-weight:400;letter-spacing:0.000px;transform:scaleX(0.9535);transform-origin:0 0;">17:00</div>
<div class="t" id="tx70" style="left:517.40px;top:651.39px;font-size:12.3px;color:#454545;font-weight:400;letter-spacing:0.000px;">–</div>
<div class="t" id="tx71" style="left:517.40px;top:669.79px;font-size:12.3px;color:#454545;font-weight:400;letter-spacing:0.000px;transform:scaleX(0.9535);transform-origin:0 0;">18:00</div>
<div class="t" id="tx72" style="left:517.40px;top:698.99px;font-size:12.3px;color:#454545;font-weight:400;letter-spacing:0.000px;transform:scaleX(0.9408);transform-origin:0 0;">18:00 -</div>
<div class="t" id="tx73" style="left:517.40px;top:716.09px;font-size:12.3px;color:#454545;font-weight:400;letter-spacing:0.000px;transform:scaleX(0.9535);transform-origin:0 0;">19:00</div>
<div class="t" id="tx74" style="left:517.40px;top:743.99px;font-size:12.3px;color:#454545;font-weight:400;letter-spacing:0.000px;transform:scaleX(0.9408);transform-origin:0 0;">19:00 -</div>
<div class="t" id="tx75" style="left:517.40px;top:761.09px;font-size:12.3px;color:#454545;font-weight:400;letter-spacing:0.000px;transform:scaleX(0.9227);transform-origin:0 0;">20:00</div>
<div class="t" id="tx76" style="left:517.40px;top:787.99px;font-size:12.3px;color:#454545;font-weight:400;letter-spacing:0.000px;transform:scaleX(0.9160);transform-origin:0 0;">20:00 -</div>
<div class="t" id="tx77" style="left:517.40px;top:805.09px;font-size:12.3px;color:#454545;font-weight:400;letter-spacing:0.000px;transform:scaleX(0.9227);transform-origin:0 0;">21:00</div>
<svg class="a" style="left:0;top:0;z-index:10" width="1497" height="877" viewBox="0 0 1497 877"><rect x="31.3" y="385.5" width="362.2" height="30.20000000000001" fill="none" stroke="#ec1c24" stroke-width="4.6"/><ellipse cx="353.5" cy="368.1" rx="14.0" ry="12.6" fill="none" stroke="#ec1c24" stroke-width="3"/><text x="352.6" y="374.1" font-family="Liberation Sans" font-size="18.44" font-weight="400" text-anchor="middle" fill="#ec1c24" stroke="#ec1c24" stroke-width="0.75"></text><path d="M349 364.3 L353.6 361.4 V373.2 M349.3 373.3 H357.3" fill="none" stroke="#ec1c24" stroke-width="2"/><rect x="349.2" y="381" width="8.6" height="3" fill="#ec1c24"/><rect x="25.6" y="423.5" width="26.699999999999996" height="25.100000000000023" fill="none" stroke="#ec1c24" stroke-width="3"/><rect x="56.5" y="423.5" width="25" height="25.899999999999977" fill="none" stroke="#1db04b" stroke-width="3"/><rect x="84.5" y="423.5" width="25.799999999999997" height="25.69999999999999" fill="none" stroke="#ec1c24" stroke-width="3"/><ellipse cx="38.4" cy="467.3" rx="12.799999999999999" ry="12.9" fill="none" stroke="#ec1c24" stroke-width="2.8"/><text x="38.25" y="472.9" font-family="Liberation Sans" font-size="18.16" font-weight="400" text-anchor="middle" fill="#ec1c24" stroke="#ec1c24" stroke-width="0.75">2</text><ellipse cx="75.4" cy="467" rx="12.6" ry="12.299999999999999" fill="none" stroke="#ec1c24" stroke-width="2.8"/><text x="75.4" y="472.9" font-family="Liberation Sans" font-size="18.16" font-weight="400" text-anchor="middle" fill="#ec1c24" stroke="#ec1c24" stroke-width="0.75">3</text><ellipse cx="107" cy="466.1" rx="12.299999999999999" ry="12.4" fill="none" stroke="#ec1c24" stroke-width="2.8"/><text x="106.85" y="471.9" font-family="Liberation Sans" font-size="18.30" font-weight="400" text-anchor="middle" fill="#ec1c24" stroke="#ec1c24" stroke-width="0.75">4</text><ellipse cx="582.5" cy="119" rx="14.1" ry="12.6" fill="none" stroke="#ec1c24" stroke-width="2.8"/><text x="581.35" y="124.9" font-family="Liberation Sans" font-size="17.88" font-weight="400" text-anchor="middle" fill="#ec1c24" stroke="#ec1c24" stroke-width="0.75">5</text><rect x="505.5" y="143.5" width="982" height="691" fill="none" stroke="#ec1c24" stroke-width="5"/></svg></body></html>
